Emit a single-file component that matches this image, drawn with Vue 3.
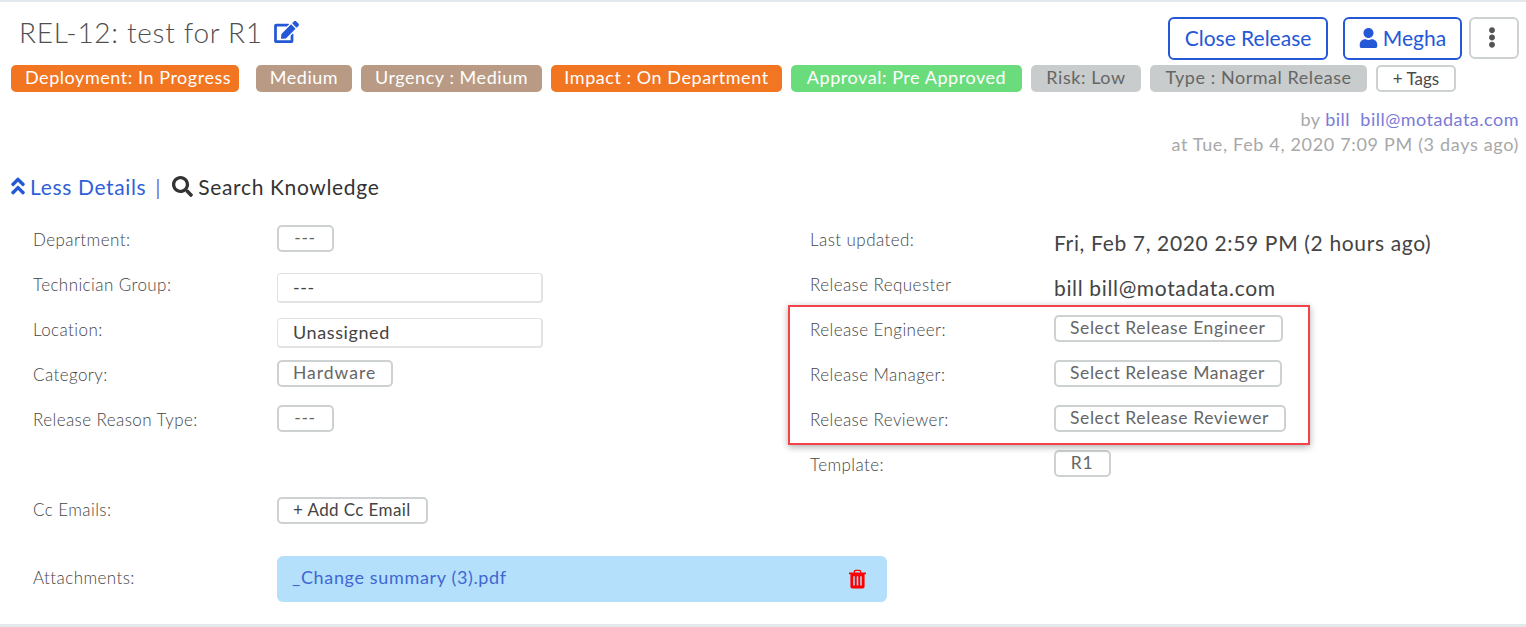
<script setup>
const tags = [
  { text: 'Deployment: In Progress', kind: 'orange', w: 228 },
  { text: 'Medium', kind: 'brown', w: 96 },
  { text: 'Urgency : Medium', kind: 'brown', w: 181 },
  { text: 'Impact : On Department', kind: 'orange', w: 231 },
  { text: 'Approval: Pre Approved', kind: 'green', w: 231 },
  { text: 'Risk: Low', kind: 'grey', w: 110 },
  { text: 'Type : Normal Release', kind: 'grey', w: 217 }
]
</script>

<template>
  <div class="page">
    <header class="head">
      <div class="title-row">
        <h1 class="title">
          REL-12: test for R1
          <svg class="edit" viewBox="0 0 576 512"><path fill="currentColor" d="M402.6 83.2l90.2 90.2c3.8 3.8 3.8 10 0 13.8L274.4 405.6l-92.8 10.3c-12.4 1.4-22.9-9.1-21.5-21.5l10.3-92.8L388.8 83.2c3.8-3.8 10-3.8 13.8 0zm162-22.9l-48.8-48.8c-15.2-15.2-39.9-15.2-55.2 0l-35.4 35.4c-3.8 3.8-3.8 10 0 13.8l90.2 90.2c3.8 3.8 10 3.8 13.8 0l35.4-35.4c15.2-15.3 15.2-40 0-55.2zM384 346.2V448H64V128h229.8c3.2 0 6.2-1.3 8.5-3.5l40-40c7.6-7.6 2.2-20.5-8.5-20.5H48C21.5 64 0 85.5 0 112v352c0 26.5 21.5 48 48 48h352c26.5 0 48-21.5 48-48V306.2c0-10.7-12.9-16-20.5-8.5l-40 40c-2.2 2.3-3.5 5.3-3.5 8.5z"/></svg>
        </h1>
        <div class="actions">
          <button class="btn-primary close">Close Release</button>
          <button class="btn-primary megha">
            <svg class="user" viewBox="0 0 448 512"><path fill="currentColor" d="M224 256c70.7 0 128-57.3 128-128S294.7 0 224 0 96 57.3 96 128s57.3 128 128 128zm89.6 32h-16.7c-22.2 10.2-46.9 16-72.9 16s-50.6-5.8-72.9-16h-16.7C60.2 288 0 348.2 0 422.4V464c0 26.5 21.5 48 48 48h352c26.5 0 48-21.5 48-48v-41.6c0-74.2-60.2-134.4-134.4-134.4z"/></svg>
            Megha
          </button>
          <button class="btn-more" aria-label="More">
            <svg class="dots" viewBox="0 0 192 512"><path fill="currentColor" d="M96 184c39.8 0 72 32.2 72 72s-32.2 72-72 72-72-32.2-72-72 32.2-72 72-72zM24 80c0 39.8 32.2 72 72 72s72-32.2 72-72S135.8 8 96 8 24 40.2 24 80zm0 352c0 39.8 32.2 72 72 72s72-32.2 72-72-32.2-72-72-72-72 32.2-72 72z"/></svg>
          </button>
        </div>
      </div>
      <div class="tags">
        <span v-for="t in tags" :key="t.text" class="tag" :class="t.kind" :style="{ width: t.w + 'px' }">{{ t.text }}</span>
        <button class="add-tag">+ Tags</button>
      </div>
      <div class="meta">
        <div class="by">by <a>bill</a>&nbsp; <a>bill@motadata.com</a></div>
        <div class="at">at Tue, Feb 4, 2020 7:09 PM (3 days ago)</div>
      </div>
    </header>

    <div class="links">
      <svg class="dbl" viewBox="0 0 320 512"><path fill="currentColor" d="M177 255.7l136 136c9.4 9.4 9.4 24.6 0 33.9l-22.6 22.6c-9.4 9.4-24.6 9.4-33.9 0L160 351.9l-96.4 96.4c-9.4 9.4-24.6 9.4-33.9 0L7 425.7c-9.4-9.4-9.4-24.6 0-33.9l136-136c9.4-9.5 24.6-9.5 34-.1zm-34-192L7 199.7c-9.4 9.4-9.4 24.6 0 33.9l22.6 22.6c9.4 9.4 24.6 9.4 33.9 0l96.4-96.4 96.4 96.4c9.4 9.4 24.6 9.4 33.9 0l22.6-22.6c9.4-9.4 9.4-24.6 0-33.9l-136-136c-9.2-9.4-24.4-9.4-33.8 0z"/></svg>
      <a class="less">Less Details</a>
      <span class="sep">|</span>
      <svg class="search" viewBox="0 0 512 512"><path fill="currentColor" d="M505 442.7L405.3 343c-4.5-4.5-10.6-7-17-7H372c27.6-35.3 44-79.7 44-128C416 93.1 322.9 0 208 0S0 93.1 0 208s93.1 208 208 208c48.3 0 92.7-16.4 128-44v16.3c0 6.4 2.5 12.5 7 17l99.7 99.7c9.4 9.4 24.6 9.4 33.9 0l28.3-28.3c9.4-9.4 9.4-24.6.1-34zM208 336c-70.7 0-128-57.2-128-128 0-70.7 57.2-128 128-128 70.7 0 128 57.2 128 128 0 70.7-57.2 128-128 128z"/></svg>
      <span class="know">Search Knowledge</span>
    </div>

    <section class="details">
      <div class="col col-left">
        <div class="row"><span class="label">Department:</span><span class="chip">---</span></div>
        <div class="row"><span class="label">Technician Group:</span><span class="box">---</span></div>
        <div class="row"><span class="label">Location:</span><span class="box">Unassigned</span></div>
        <div class="row"><span class="label">Category:</span><span class="chip hw">Hardware</span></div>
        <div class="row"><span class="label">Release Reason Type:</span><span class="chip">---</span></div>
        <div class="row"></div>
        <div class="row"><span class="label">Cc Emails:</span><span class="chip dark">+ Add Cc Email</span></div>
      </div>
      <div class="col col-right">
        <div class="row"><span class="label">Last updated:</span><span class="value">Fri, Feb 7, 2020 2:59 PM (2 hours ago)</span></div>
        <div class="row"><span class="label">Release Requester</span><span class="value">bill bill@motadata.com</span></div>
        <div class="highlighted">
          <div class="row"><span class="label">Release Engineer:</span><span class="chip">Select Release Engineer</span></div>
          <div class="row"><span class="label">Release Manager:</span><span class="chip">Select Release Manager</span></div>
          <div class="row"><span class="label">Release Reviewer:</span><span class="chip">Select Release Reviewer</span></div>
          <div class="red-frame"></div>
        </div>
        <div class="row"><span class="label">Template:</span><span class="chip">R1</span></div>
      </div>
    </section>

    <div class="attach-row">
      <span class="label">Attachments:</span>
      <div class="attachment">
        <a class="file">_Change summary (3).pdf</a>
        <svg class="trash" viewBox="0 0 18 20">
          <path fill="none" stroke="currentColor" stroke-width="1.4" d="M5.7 3.4V2.2a1.3 1.3 0 0 1 1.3-1.3h4a1.3 1.3 0 0 1 1.3 1.3v1.2"/>
          <path fill="currentColor" fill-rule="evenodd" d="M0 3h18v2h-1.5v13a2 2 0 0 1-2 2h-11a2 2 0 0 1-2-2V5H0zM4.5 7v10h1.6V7zM8.2 7v10h1.6V7zM11.9 7v10h1.6V7z"/>
        </svg>
      </div>
    </div>
  </div>
</template>

<style>
html, body { margin: 0; background: #fff; }
</style>

<style scoped>
.page {
  box-sizing: border-box;
  width: 1526px;
  height: 627px;
  border-top: 2px solid #e3e8ec;
  border-bottom: 3px solid #e3e8ec;
  font-family: "Lato", "Open Sans", sans-serif;
  color: #4a4a4a;
  background: #fff;
  overflow: hidden;
}
.head { padding: 15px 7px 0 11px; }
.title-row { display: flex; justify-content: space-between; align-items: flex-start; height: 48px; }
.title {
  margin: -1px 0 0;
  padding: 0 0 0 8px;
  font-size: 28px;
  line-height: 32px;
  font-weight: 300;
  letter-spacing: 0.7px;
  color: #4f4f4f;
  display: flex;
  align-items: center;
  gap: 11px;
}
.edit { width: 25px; height: 22px; color: #2458d6; }
.actions { display: flex; align-items: flex-start; }
.btn-primary {
  box-sizing: border-box;
  height: 43px;
  border: 2px solid #2458d6;
  border-radius: 6px;
  background: #fff;
  color: #2458d6;
  font: 400 21px "Lato", sans-serif;
  display: flex;
  align-items: center;
  justify-content: center;
  padding: 0 0 2px;
}
.close { width: 160px; margin-right: 15px; }
.megha { width: 119px; margin-right: 7px; gap: 5px; }
.user { width: 19px; height: 20px; }
.btn-more {
  box-sizing: border-box;
  width: 50px;
  height: 42px;
  border: 2px solid #cdd1d1;
  border-radius: 6px;
  background: #fff;
  color: #555;
  padding: 0 4px 1px 0;
  display: flex;
  align-items: center;
  justify-content: center;
}
.dots { width: 8px; height: 21px; }
.tags { display: flex; gap: 9px; align-items: center; }
.tag {
  box-sizing: border-box;
  height: 27px;
  line-height: 25px;
  border-radius: 5px;
  font-size: 18px;
  letter-spacing: 0.55px;
  color: #fff;
  white-space: nowrap;
  text-align: center;
}
.orange { background: #f27521; }
.brown { background: #b99a84; }
.green { background: #6bdc7c; }
.grey { background: #c8cccc; color: #666; }
.tag:first-child { margin-right: 8px; padding-left: 14px; text-align: left; }
.add-tag {
  box-sizing: border-box;
  height: 27px;
  width: 80px;
  border: 2px solid #cdd1d1;
  border-radius: 5px;
  background: #fff;
  color: #4a4a4a;
  font: 400 17px "Lato", sans-serif;
  padding: 0;
}
.meta {
  margin-top: 15px;
  text-align: right;
  font-size: 18px;
  line-height: 25px;
  color: #a8a8a8;
}
.by { letter-spacing: 0.5px; }
.at { letter-spacing: 0.67px; }
.meta a { color: #7a7ad8; }
.links {
  margin-top: 14px;
  padding-left: 11px;
  height: 30px;
  display: flex;
  align-items: center;
  font-size: 21px;
  letter-spacing: 0.65px;
}
.dbl { width: 14px; height: 22px; color: #2458d6; margin-right: 5px; }
.less { color: #2f5fd8; }
.sep { color: #6f6fd8; margin: 0 11px 0 9px; }
.search { width: 21px; height: 21px; color: #333; margin-right: 5px; }
.know { color: #333; }
.details { display: grid; grid-template-columns: 810px 1fr; margin-top: 14px; }
.col-left { padding-left: 33px; }
.row { display: flex; align-items: center; height: 45px; }
.label {
  flex: none;
  width: 244px;
  padding-top: 4px;
  font-size: 17px;
  letter-spacing: 0.42px;
  color: #454545;
  font-weight: 300;
}
.chip {
  box-sizing: border-box;
  min-width: 57px;
  height: 27px;
  margin-top: 2px;
  line-height: 22px;
  padding: 0 15px 0 14px;
  border: 2px solid #cdd1d1;
  border-radius: 5px;
  font-size: 17.5px;
  letter-spacing: 0.6px;
  color: #666;
  white-space: nowrap;
  text-align: center;
}
.chip.hw { letter-spacing: 1px; }
.chip.dark { margin-top: 6px; font-size: 17px; letter-spacing: 0.4px; color: #444; }
.box {
  box-sizing: border-box;
  width: 266px;
  height: 30px;
  margin-top: 10px;
  line-height: 27px;
  padding-left: 15px;
  border: 1px solid #e2e4e4;
  border-bottom-width: 2px;
  border-right-width: 2px;
  border-radius: 4px;
  font-size: 18px;
  letter-spacing: 0.6px;
  color: #444;
}
.value { margin-top: 10px; font-size: 21px; letter-spacing: 0.65px; color: #444; }
.highlighted { position: relative; }
.red-frame {
  position: absolute;
  left: -22px;
  top: 0;
  width: 522px;
  height: 140px;
  box-sizing: border-box;
  border: 2px solid #f2434b;
  box-shadow: 0 2px 7px rgba(0, 0, 0, 0.32);
  pointer-events: none;
}
.attach-row { display: flex; align-items: center; padding-left: 33px; margin-top: 26px; }
.attach-row .label { padding-top: 0; margin-top: -4px; }
.attachment {
  box-sizing: border-box;
  width: 610px;
  height: 46px;
  background: #b4e0fb;
  border-radius: 6px;
  display: flex;
  align-items: center;
  justify-content: space-between;
  padding: 0 21px 0 15px;
}
.file { color: #3f67d2; font-size: 18px; letter-spacing: 0.65px; margin-top: -4px; }
.trash { width: 17px; height: 20px; color: #f00; }
</style>
